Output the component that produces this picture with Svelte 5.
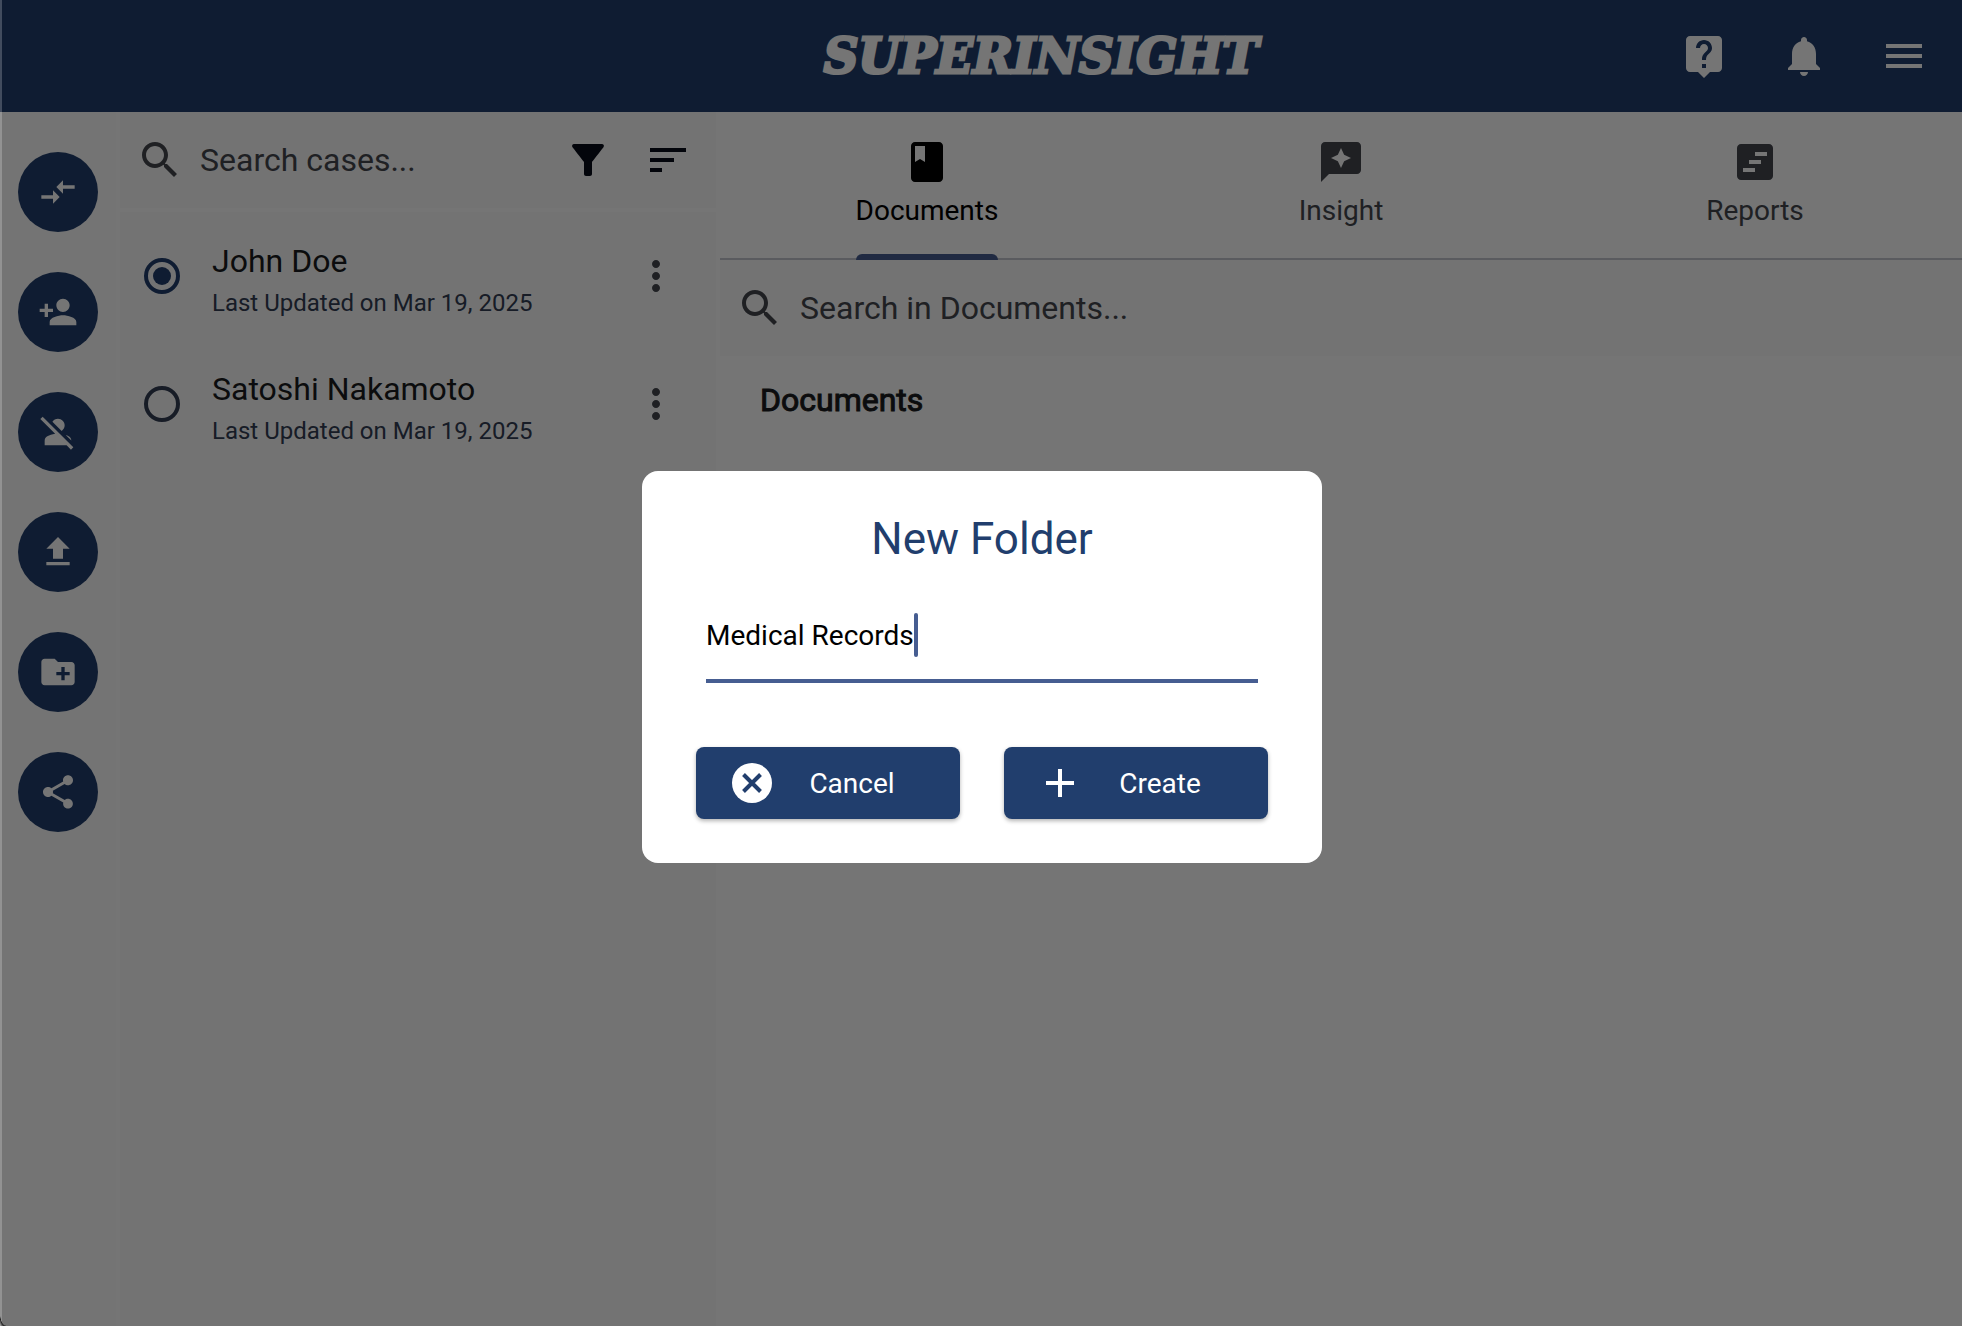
<script>
  const railActions = [
    { label: 'Compare', d: 'M9.01 14H2v2h7.01v3L13 15l-3.99-4v3zm5.98-1v-3H22V8h-7.01V5L11 9l3.99 4z' },
    { label: 'Add case', d: 'M15 12c2.21 0 4-1.79 4-4s-1.79-4-4-4-4 1.79-4 4 1.79 4 4 4zm-9-2V7H4v3H1v2h3v3h2v-3h3v-2H6zm9 4c-2.67 0-8 1.34-8 4v2h16v-2c0-2.66-5.33-4-8-4z' },
    { label: 'Remove case', d: 'M8.65 5.82C9.36 4.72 10.6 4 12 4c2.21 0 4 1.79 4 4 0 1.4-.72 2.64-1.82 3.35L8.65 5.82zM20 17.17c-.02-1.1-.63-2.11-1.61-2.62-.54-.28-1.13-.54-1.77-.76L20 17.17zM21.19 21.19L2.81 2.81 1.39 4.22l8.89 8.89c-1.81.23-3.39.79-4.67 1.45C4.61 15.07 4 16.11 4 17.22V20h13.17l2.61 2.61 1.41-1.42z' },
    { label: 'Upload', d: 'M5 20h14v-2H5v2zm0-10h4v6h6v-6h4l-7-7-7 7z' },
    { label: 'New folder', d: 'M20 6h-8l-2-2H4c-1.11 0-1.99.89-1.99 2L2 18c0 1.11.89 2 2 2h16c1.11 0 2-.89 2-2V8c0-1.11-.89-2-2-2zm-1 8h-3v3h-2v-3h-3v-2h3V9h2v3h3v2z' },
    { label: 'Share', d: 'M18 16.08c-.76 0-1.44.3-1.96.77L8.91 12.7c.05-.23.09-.46.09-.7s-.04-.47-.09-.7l7.05-4.11c.54.5 1.25.81 2.04.81 1.66 0 3-1.34 3-3s-1.34-3-3-3-3 1.34-3 3c0 .24.04.47.09.7L8.04 9.81C7.5 9.31 6.79 9 6 9c-1.66 0-3 1.34-3 3s1.34 3 3 3c.79 0 1.5-.31 2.04-.81l7.12 4.16c-.05.21-.08.43-.08.65 0 1.61 1.31 2.92 2.92 2.92s2.92-1.31 2.92-2.92-1.31-2.92-2.92-2.92z' }
  ];

  const headerActions = [
    { label: 'Help', d: 'M19 2H5c-1.11 0-2 .9-2 2v14c0 1.1.89 2 2 2h4l3 3 3-3h4c1.1 0 2-.9 2-2V4c0-1.1-.9-2-2-2zm-6 16h-2v-2h2v2zm2.07-7.75l-.9.92C13.45 11.9 13 12.5 13 14h-2v-.5c0-1.1.45-2.1 1.17-2.83l1.24-1.26c.37-.36.59-.86.59-1.41 0-1.1-.9-2-2-2s-2 .9-2 2H8c0-2.21 1.79-4 4-4s4 1.79 4 4c0 .88-.36 1.68-.93 2.25z' },
    { label: 'Notifications', d: 'M12 22c1.1 0 2-.9 2-2h-4c0 1.1.89 2 2 2zm6-6v-5c0-3.07-1.64-5.64-4.5-6.32V4c0-.83-.67-1.5-1.5-1.5s-1.5.67-1.5 1.5v.68C7.63 5.36 6 7.92 6 11v5l-2 2v1h16v-1l-2-2z' },
    { label: 'Menu', d: 'M3 18h18v-2H3v2zm0-5h18v-2H3v2zm0-7v2h18V6H3z' }
  ];

  const tabs = [
    { label: 'Documents', d: 'M18 2H6c-1.1 0-2 .9-2 2v16c0 1.1.9 2 2 2h12c1.1 0 2-.9 2-2V4c0-1.1-.9-2-2-2zM6 4h5v8l-2.5-1.5L6 12V4z' },
    { label: 'Insight', d: 'M20 2H4c-1.1 0-2 .9-2 2v18l4-4h14c1.1 0 2-.9 2-2V4c0-1.1-.9-2-2-2zM12 5l1.57 3.43L17 10l-3.43 1.57L12 15l-1.57-3.43L7 10l3.43-1.57z' },
    { label: 'Reports', d: 'M19 3H5c-1.1 0-2 .9-2 2v14c0 1.1.9 2 2 2h14c1.1 0 2-.9 2-2V5c0-1.1-.9-2-2-2zM12 7h6v2h-6zM9 11h6v2H9zM6 15h6v2H6z' }
  ];

  const cases = [
    { id: 'doe', name: 'John Doe', updated: 'Last Updated on Mar 19, 2025' },
    { id: 'nakamoto', name: 'Satoshi Nakamoto', updated: 'Last Updated on Mar 19, 2025' }
  ];

  const searchIcon = 'M15.5 14h-.79l-.28-.27C15.41 12.59 16 11.11 16 9.5 16 5.91 13.09 3 9.5 3S3 5.91 3 9.5 5.91 16 9.5 16c1.61 0 3.09-.59 4.23-1.57l.27.28v.79l5 4.99L20.49 19l-4.99-5zm-6 0C7.01 14 5 11.99 5 9.5S7.01 5 9.5 5 14 7.01 14 9.5 11.99 14 9.5 14z';
  const filterIcon = 'M4.25 5.61C6.27 8.2 10 13 10 13v6c0 .55.45 1 1 1h2c.55 0 1-.45 1-1v-6s3.72-4.8 5.74-7.39A.998.998 0 0 0 18.95 4H5.04c-.83 0-1.3.95-.79 1.61z';
  const sortIcon = 'M3 18h6v-2H3v2zM3 6v2h18V6H3zm0 7h12v-2H3v2z';
  const moreIcon = 'M12 8c1.1 0 2-.9 2-2s-.9-2-2-2-2 .9-2 2 .9 2 2 2zm0 2c-1.1 0-2 .9-2 2s.9 2 2 2 2-.9 2-2-.9-2-2-2zm0 6c-1.1 0-2 .9-2 2s.9 2 2 2 2-.9 2-2-.9-2-2-2z';

  let selected = $state('doe');
  let activeTab = $state('Documents');
  let folderName = $state('Medical Records');
</script>

{#snippet icon(d)}
  <svg class="icon" viewBox="0 0 24 24" aria-hidden="true"><path fill-rule="evenodd" {d} /></svg>
{/snippet}

<div class="window">
  <header class="topbar">
    <div class="brand">SUPERINSIGHT</div>
    <div class="top-actions">
      {#each headerActions as action}
        <button type="button" aria-label={action.label}>{@render icon(action.d)}</button>
      {/each}
    </div>
  </header>

  <div class="columns">
    <nav class="rail" aria-label="Case actions">
      {#each railActions as action}
        <button type="button" aria-label={action.label}>{@render icon(action.d)}</button>
      {/each}
    </nav>

    <aside class="cases">
      <div class="search">
        {@render icon(searchIcon)}
        <input type="text" placeholder="Search cases..." aria-label="Search cases" />
        <div class="tools">
          <button type="button" aria-label="Filter">{@render icon(filterIcon)}</button>
          <button type="button" aria-label="Sort">{@render icon(sortIcon)}</button>
        </div>
      </div>
      <ul>
        {#each cases as item}
          <li>
            <input type="radio" id={item.id} name="case" value={item.id} bind:group={selected} />
            <label for={item.id}>
              <span class="name">{item.name}</span>
              <span class="updated">{item.updated}</span>
            </label>
            <button type="button" aria-label="Options for {item.name}">{@render icon(moreIcon)}</button>
          </li>
        {/each}
      </ul>
    </aside>

    <main>
      <div class="tabs" role="tablist">
        {#each tabs as tab}
          <button
            type="button"
            role="tab"
            aria-selected={activeTab === tab.label}
            class:active={activeTab === tab.label}
            onclick={() => (activeTab = tab.label)}
          >
            {@render icon(tab.d)}
            <span>{tab.label}</span>
          </button>
        {/each}
      </div>
      <div class="search">
        {@render icon(searchIcon)}
        <input type="text" placeholder="Search in Documents..." aria-label="Search in Documents" />
      </div>
      <h1>Documents</h1>
    </main>
  </div>
</div>

<div class="scrim">
  <div class="dialog" role="dialog" aria-modal="true" aria-labelledby="dialog-title">
    <h2 id="dialog-title">New Folder</h2>
    <div class="field">
      <input type="text" aria-label="Folder name" bind:value={folderName} />
      <span class="caret"></span>
    </div>
    <div class="dialog-actions">
      <button type="button">
        <svg class="glyph" viewBox="0 0 48 48" aria-hidden="true">
          <circle cx="24" cy="24" r="20" />
          <path class="cut" d="M15.5 15.5l17 17M32.5 15.5l-17 17" />
        </svg>
        <span>Cancel</span>
      </button>
      <button type="button">
        <svg class="glyph" viewBox="0 0 24 24" aria-hidden="true"><path d="M19 13h-6v6h-2v-6H5v-2h6V5h2v6h6v2z" /></svg>
        <span>Create</span>
      </button>
    </div>
  </div>
</div>
<div class="edge"></div>
<div class="corner"></div>

<style>
  :global(body) {
    margin: 0;
    background: #fff;
  }

  .window,
  .scrim {
    font-family: Roboto, 'Liberation Sans', sans-serif;
  }

  .window {
    display: flex;
    flex-direction: column;
    min-height: 100vh;
    color: #1a1b20;
  }

  button {
    display: flex;
    align-items: center;
    justify-content: center;
    margin: 0;
    padding: 0;
    border: 0;
    background: none;
    color: inherit;
    font: inherit;
    cursor: pointer;
  }

  input {
    margin: 0;
    padding: 0;
    border: 0;
    outline: 0;
    background: none;
    font: inherit;
  }

  .icon {
    display: block;
    flex: none;
    width: 48px;
    height: 48px;
    fill: currentColor;
  }

  .topbar {
    display: grid;
    grid-template-columns: 1fr auto 1fr;
    align-items: center;
    height: 112px;
    padding: 0 34px 0 154px;
    background: #213e6d;
    color: #fff;
  }

  .brand {
    grid-column: 2;
    font-family: 'DejaVu Serif', serif;
    font-size: 48px;
    font-style: italic;
    font-weight: 700;
    line-height: 60px;
    -webkit-text-stroke: 3px #fff;
  }

  .top-actions {
    display: flex;
    justify-content: flex-end;
    gap: 52px;
  }

  .columns {
    display: flex;
    flex: 1;
  }

  .rail {
    display: flex;
    flex-direction: column;
    gap: 40px;
    padding: 40px 18px;
    border-right: 4px solid #fff;
    background: #fcfcfc;
  }

  .rail button {
    width: 80px;
    height: 80px;
    border-radius: 50%;
    background: #213e6d;
    color: #fff;
  }

  .rail .icon {
    width: 40px;
    height: 40px;
  }

  .cases {
    flex: none;
    width: 596px;
    border-right: 4px solid #fff;
    background: #fbfbfb;
  }

  .search {
    display: flex;
    align-items: center;
    gap: 16px;
    height: 96px;
    padding: 0 24px 0 16px;
    background: #fafafa;
    color: #44474e;
    font-size: 32px;
  }

  .search input {
    flex: 1;
    min-width: 0;
    height: 48px;
  }

  .search input::placeholder {
    color: #44474e;
    opacity: 1;
  }

  .cases .search {
    border-bottom: 4px solid #fff;
  }

  .tools {
    display: flex;
    gap: 32px;
    color: #080b18;
  }

  ul {
    margin: 0;
    padding: 0;
    list-style: none;
  }

  li {
    display: flex;
    align-items: center;
    height: 128px;
    padding: 0 36px 0 24px;
  }

  li input {
    display: grid;
    place-items: center;
    flex: none;
    width: 36px;
    height: 36px;
    border: 4px solid #323d54;
    border-radius: 50%;
    appearance: none;
  }

  li input:checked {
    border-color: #213e6d;
  }

  li input:checked::before {
    content: '';
    width: 18px;
    height: 18px;
    border-radius: 50%;
    background: #213e6d;
  }

  label {
    display: flex;
    flex: 1;
    flex-direction: column;
    gap: 2px;
    padding: 12px 0 0 32px;
    line-height: 40px;
  }

  .name {
    font-size: 32px;
  }

  .updated {
    color: #323d54;
    font-size: 24px;
  }

  li button {
    color: #44474e;
  }

  main {
    flex: 1;
    min-width: 0;
    background: #fefefe;
  }

  .tabs {
    display: grid;
    grid-template-columns: repeat(3, 1fr);
    height: 146px;
    border-bottom: 2px solid #c4c6d0;
    color: #44474e;
    font-size: 28px;
    line-height: 40px;
  }

  .tabs button {
    flex-direction: column;
    justify-content: flex-start;
    gap: 5px;
    padding-top: 26px;
  }

  .tabs .active {
    color: #000;
  }

  .tabs span {
    height: 67px;
  }

  .tabs .active span {
    position: relative;
  }

  .tabs .active span::after {
    content: '';
    position: absolute;
    inset: auto 0 -2px;
    height: 6px;
    border-radius: 6px 6px 0 0;
    background: #465d91;
  }

  h1 {
    margin: 0;
    padding: 24px 40px;
    font-size: 32px;
    font-weight: 400;
    line-height: 40px;
    -webkit-text-stroke: 1px #1a1b20;
  }

  .scrim {
    position: fixed;
    inset: 0;
    display: flex;
    align-items: center;
    justify-content: center;
    padding: 8px 0 0 2px;
    background: rgba(0, 0, 0, 0.54);
  }

  .dialog {
    box-sizing: border-box;
    width: 680px;
    padding: 40px 54px 44px;
    border-radius: 16px;
    background: #fff;
  }

  h2 {
    margin: 0;
    color: #213e6d;
    font-size: 44px;
    font-weight: 400;
    line-height: 56px;
    text-align: center;
  }

  .field {
    display: flex;
    margin: 46px 10px 64px;
    padding-bottom: 22px;
    border-bottom: 4px solid #465d91;
    font-size: 28px;
  }

  .field input {
    field-sizing: content;
    height: 44px;
    color: #000;
    caret-color: transparent;
  }

  .caret {
    width: 4px;
    border-radius: 2px;
    background: #465d91;
  }

  .dialog-actions {
    display: flex;
    gap: 44px;
  }

  .dialog-actions button {
    flex: 1;
    height: 72px;
    padding: 0 32px;
    border-radius: 8px;
    background: #213e6d;
    box-shadow: 0 2px 4px rgba(0, 0, 0, 0.3);
    color: #fff;
    font-size: 28px;
  }

  .dialog-actions span {
    flex: 1;
    text-align: center;
  }

  .glyph {
    flex: none;
    width: 48px;
    height: 48px;
    fill: currentColor;
  }

  .cut {
    fill: none;
    stroke: #213e6d;
    stroke-width: 4;
  }

  .edge {
    position: fixed;
    inset: 0 auto 0 0;
    width: 2px;
    background: rgba(255, 255, 255, 0.21);
  }

  .corner {
    position: fixed;
    inset: auto auto 0 0;
    width: 6px;
    height: 12px;
    background: radial-gradient(ellipse at 100% 0, transparent 66%, #222 72%, #999 92%);
  }
</style>
